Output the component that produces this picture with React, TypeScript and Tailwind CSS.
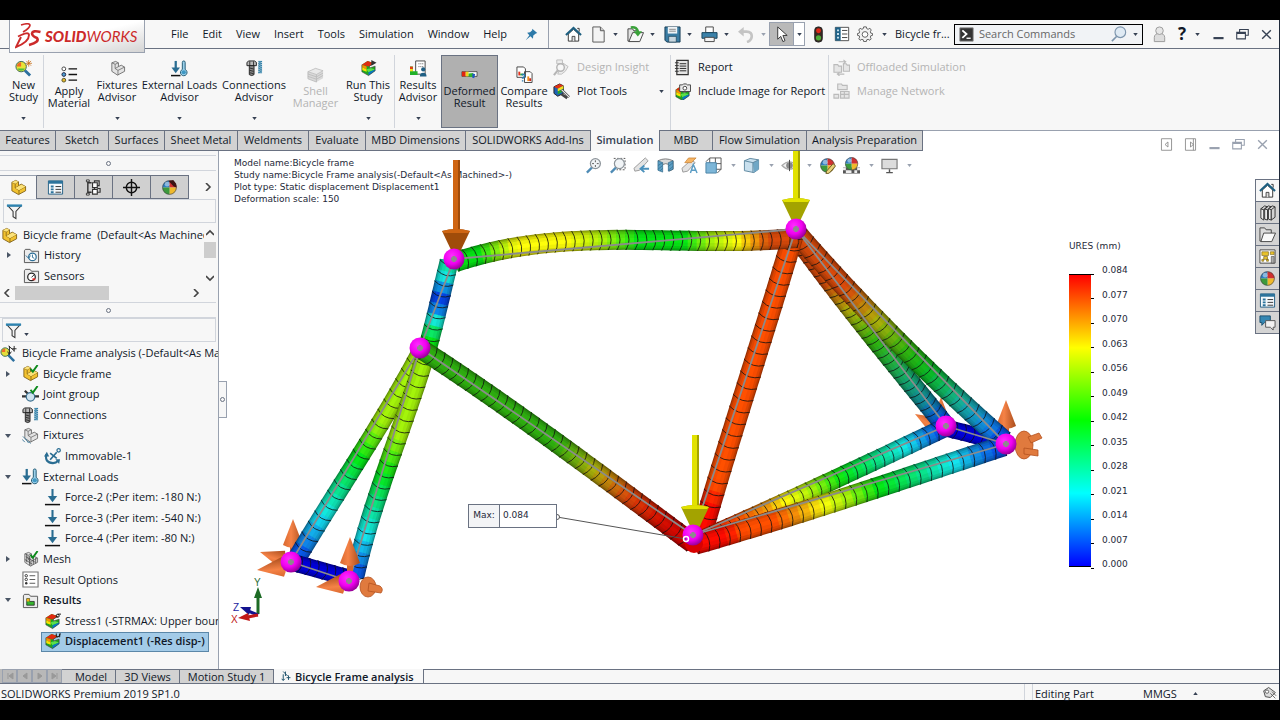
import type { ReactNode } from "react"
import clsx from "clsx"

/* ---------- icons, all drawn on an 18x18 grid ---------- */

const partShape = (
  <>
    <path d="M2 3.5 6 1.5l3 1.5v4l3-1.5 4.500 2.500v4.500L9 16.500l-7-4z" fill="#f2c230" stroke="#7a5a10" strokeWidth=".9" />
    <path d="M2 3.500 5.500 5v4.500L9.500 12l7-4M5.500 5 9 3M9.500 12v4.300M5.500 9.500 9 7.500" fill="none" stroke="#7a5a10" strokeWidth=".8" />
    <path d="M2 3.500 6 1.500 9 3 5.500 5zM5.500 9.500 12 6l4.500 2-7 4z" fill="#fbe27a" />
  </>
)

const fixtureShape = (
  <>
    <path d="M3 3l4-1.500 3 1.500v4l3-1.500 3.500 2V12L9 16l-6-4z" fill="#e3e3e3" stroke="#666" strokeWidth=".9" />
    <path d="M3 3l3.500 1.500V9L9.500 11l7-3.500M6.500 4.500 10 3M9.500 11v5M6.500 9 10 7" fill="none" stroke="#666" strokeWidth=".8" />
  </>
)

const rainbowShape = (
  <>
    <path d="M2 5 8 1l7 2.500-5 3v2l6-2v5l-7 5-7-4z" fill="#1fa51f" />
    <path d="M2 5 8 1l7 2.500L9 7z" fill="#e02a10" />
    <path d="M2 5l5 2v3l-5-2.500z" fill="#ff8a00" />
    <path d="M2 7.500 7 10v2.500l-5-2z" fill="#f4e400" />
    <path d="M7 10l4-1.500L16 10l-7 3z" fill="#5be04a" />
    <path d="M9 13l7-3v1.500l-7 5z" fill="#0877c8" />
    <path d="M2 5v7.500l7 4 7-5v-5l-6 2v-2l5-3" fill="none" stroke="#333" strokeWidth=".6" />
  </>
)

const houseShape = (
  <>
    <path d="M3.500 8.500v7.500h11V8.500L9 3.500z" fill="#fff" stroke="#333" strokeWidth="1" />
    <path d="M1 9.500 9 2l8 7.500" fill="none" stroke="#1d5f80" strokeWidth="2.200" />
    <path d="M13 2.500h2V6" fill="none" stroke="#333" />
    <path d="M7.500 16v-5h3v5" fill="#ddd" stroke="#333" strokeWidth=".9" />
  </>
)

const ballShape = (
  <>
    <path d="M9 9V1.500A7.500 7.500 0 0 0 1.500 9z" fill="#2f7fc4" />
    <path d="M9 9h7.500A7.500 7.500 0 0 0 9 1.500z" fill="#d03030" />
    <path d="M9 9v7.500A7.500 7.500 0 0 0 16.500 9z" fill="#efb92c" />
    <path d="M9 9H1.500A7.500 7.500 0 0 0 9 16.500z" fill="#3c9a3c" />
    <circle cx="9" cy="9" r="7.300" fill="none" stroke="#444" strokeWidth=".7" />
    <circle cx="6.500" cy="5.500" r="2.500" fill="#fff" opacity=".45" />
  </>
)

const propsShape = (
  <>
    <path d="M1.500 2h15v14h-15z" fill="#f4f8fb" stroke="#235f84" />
    <path d="M1.500 2h15v3h-15z" fill="#2b739c" />
    <path d="M4 7h3v2H4zM4 10h3v2H4zM4 13h3v2H4z" fill="#2b739c" />
    <path d="M9 8h6M9 11h6M9 14h6" stroke="#333" />
  </>
)

const forceShape = (
  <>
    <path d="M9 0v10" stroke="#2a6d92" strokeWidth="2.200" />
    <path d="M4 7.500h10L9 14z" fill="#2a6d92" />
    <path d="M1 16.500h16" stroke="#111" strokeWidth="1.600" />
  </>
)

const loadsShape = (
  <>
    <path d="M5 1v10" stroke="#2a6d92" strokeWidth="2.400" />
    <path d="M.5 8h9L5 14z" fill="#2a6d92" />
    <path d="M0 16.500h10" stroke="#111" strokeWidth="1.600" />
    <path d="M12 2.500a1.500 1.500 0 0 1 3 0V10a3.500 3.500 0 1 1-3 0z" fill="#9bd0ea" stroke="#1f5873" />
    <circle cx="13.500" cy="13" r="2.200" fill="#3f98c4" />
  </>
)

const boltShape = (
  <>
    <path d="M1 2.500 3 1h6l2 1.500V6H1z" fill="#b9b9b9" stroke="#222" />
    <path d="M3.500 6h5v9.500l-2.500 1-2.500-1z" fill="#888" stroke="#222" />
    <path d="M4 8.500l4 1M4 11l4 1M4 13.500l4 1M4 1.500V6M8 1.500V6" stroke="#222" strokeWidth=".9" />
    <path d="M13 1.500h4l-4 2h4l-4 2h4l-4 2h4l-4 2h4l-4 2h4l-4 2h4" fill="none" stroke="#2c7da6" strokeWidth="1" />
  </>
)

const folderShape = <path d="M1.500 4V16.500h15V4.500H9L7.500 2.500h-5z" fill="#ececec" stroke="#555" />
const tickShape = <path d="M9 4l2.500 3L16.500 0" fill="none" stroke="#0d8a1c" strokeWidth="2" />

const lensShape = (
  <>
    <path d="M7.500 11 2 16.500" stroke="#4e8bb5" strokeWidth="2.400" />
    <circle cx="11" cy="7" r="5.300" fill="#f1f4f6" stroke="#8c9399" strokeWidth="1.300" />
  </>
)

const glyphs = {
  newStudy: (
    <>
      <path d="M10.500 11 16 16.500" stroke="#2c6f9e" strokeWidth="3" />
      <circle cx="6.500" cy="7" r="5.500" fill="#e9e337" stroke="#365" />
      <path d="M2 7a4.500 4.500 0 0 1 4.500-4.500V7z" fill="#ef6a28" />
      <path d="M2.500 9h8A4.500 4.500 0 0 1 2.500 9z" fill="#4bc13e" />
      <path d="M14.500 0v7M11 3.500h7M12 1l5 5M17 1l-5 5" stroke="#c56a12" strokeWidth=".8" />
    </>
  ),
  material: (
    <>
      <path d="M8 3h9M8 9h9M8 15h9" stroke="#111" strokeWidth="1.400" />
      <circle cx="3" cy="3" r="2" fill="#fff" stroke="#444" />
      <circle cx="3" cy="9" r="2" fill="#4c9fd2" stroke="#224" />
      <circle cx="3" cy="15" r="2" fill="#e3b62a" stroke="#553" />
    </>
  ),
  fixtures: fixtureShape,
  fixtureTree: (
    <>
      {fixtureShape}
      <path d="M1 10l4 4M0 13l3 3M4 13l3 4M7 15l2 2.500" stroke="#457b99" />
    </>
  ),
  loads: loadsShape,
  bolt: boltShape,
  shell: (
    <>
      <path d="M1 6 9 2.500 17 5v8l-7 4-9-3.500z" fill="#d9d9d9" />
      <path d="M1 6 9 2.500 17 5l-7 4z" fill="#e9e9e9" stroke="#bbb" strokeWidth=".8" />
      <path d="M1 8.500l9 3 7-4M1 11l9 3 7-4M1 6v7.500l9 3.500V9" fill="none" stroke="#bbb" strokeWidth=".9" />
    </>
  ),
  run: (
    <>
      {rainbowShape}
      <path d="M12 0l5.500 3L12 6z" fill="#333" />
    </>
  ),
  results: (
    <>
      <path d="M6 1h10v14H6z" fill="#fff" stroke="#444" />
      <path d="M9 4h5M9 7h5" stroke="#555" strokeDasharray="1 1" />
      <path d="M0 7h3v5h5v4H0z" fill="#20b028" />
      <path d="M0 7h3v2.500H0z" fill="#e83c10" />
      <path d="M0 9.500h3V12H0z" fill="#f5e020" />
      <circle cx="14" cy="10" r="2.200" fill="#1f5f84" />
      <path d="M10.500 17.500a3.500 4 0 0 1 7 0z" fill="#1f5f84" />
    </>
  ),
  deformed: (
    <>
      <path d="M1 6h16v5H1z" fill="#fff" stroke="#333" strokeWidth=".8" />
      <path d="M1 6h4v5H1z" fill="#e0250f" />
      <path d="M5 6h3v5H5z" fill="#f0d51c" />
      <path d="M8 8l5-.5v4.500L8 11z" fill="#2eb52a" />
      <path d="M12 8l3 .5-1 4.500-2-.5z" fill="#2157c2" />
    </>
  ),
  compare: (
    <>
      <path d="M1 1h7l2 2v9H1zM9 6h6l2 2v9.500H9z" fill="#fff" stroke="#444" />
      <path d="M2.500 6h2v4h-2z" fill="#e4301a" />
      <path d="M4.500 8h3v2h-3z" fill="#2aa62a" />
      <path d="M12 11h2v5h-2z" fill="#ef8c1a" />
      <path d="M14 13h2v3h-2z" fill="#cc2a1a" />
      <path d="M6 9.500q3-2 3 .5t-2 2.500v1M7 15v1.500" fill="none" stroke="#2b7cb0" strokeWidth="1.600" />
    </>
  ),
  insight: (
    <>
      <path d="M4 1h6v4H4zM10 4l6 4-3 5-4 3H5z" fill="#ececec" stroke="#bdbdbd" />
      <circle cx="8" cy="9" r="4" fill="#f7f7f7" stroke="#b5b5b5" strokeWidth="1.500" />
      <path d="M5 12l-4 5" stroke="#b5b5b5" strokeWidth="2.200" />
    </>
  ),
  plot: (
    <>
      <path d="M1 4l6-3 4 2v8l-6 3-4-3z" fill="#1e64b8" stroke="#222" />
      <path d="M1 4l6-3 4 2-6 3z" fill="#e23214" />
      <path d="M5 6l6-3v3L5 9z" fill="#f5e11b" />
      <path d="M5 9l6-3v3l-6 3z" fill="#27a52b" />
      <path d="M9 7l8 8M9 12l6 4" stroke="#444" strokeWidth="2.600" />
      <path d="M9 7l8 8" stroke="#eee" strokeWidth="1.200" />
    </>
  ),
  report: (
    <>
      <path d="M3 1.500h12v15H3z" fill="#e5e5e5" stroke="#333" strokeWidth="1.300" />
      <path d="M6 5h7M6 7.500h7M6 10h7M6 12.500h7" stroke="#222" />
      <path d="M1 4h4M1 7h4M1 10h4M1 13h4" stroke="#333" />
    </>
  ),
  imageReport: (
    <>
      <g transform="translate(0 2)">{rainbowShape}</g>
      <path d="M6 2h3l1-1h3l1 1h3.500v7H6z" fill="#e9e9e9" stroke="#444" />
      <circle cx="11.500" cy="5.500" r="2" fill="#fff" stroke="#444" />
    </>
  ),
  offload: (
    <>
      <path d="M1 6h4l1 1.500h3V14H1zM11 5h3l1 1.500h2.500V13H11z" fill="#e6e6e6" stroke="#bbb" strokeWidth="1.200" />
      <path d="M6 3h7M11 1l2.500 2L11 5M12 16H5M7 14l-2.500 2L7 18" fill="none" stroke="#bbb" strokeWidth="1.100" />
    </>
  ),
  network: (
    <path d="M5 1h4l1 1.500h5V7H5zM8 9h9v7H8zM1 12h5v4H1zM8 12h9M12 9v7" fill="#e6e6e6" stroke="#bbb" strokeWidth="1.200" />
  ),
  pin: <path d="M10 1l7 6-2 .5-3.500 3L11 15 7.500 11.500 1 17l5-7L3 6.500l4-.5 3-3z" fill="#2d79a8" />,
  house: houseShape,
  page: (
    <>
      <path d="M3 1h8l4 4v12H3z" fill="#f3f3f3" stroke="#555" />
      <path d="M11 1v4h4" fill="#ccc" stroke="#555" />
    </>
  ),
  open: (
    <>
      <path d="M1 3h5l1 2h5v11H1z" fill="#e2e2e2" stroke="#444" />
      <path d="M2 16.500 6 7h11.500l-4 9.500z" fill="#f7f7f7" stroke="#444" />
      <path d="M4 1.500q7-1 7.500 5" fill="none" stroke="#3aa23a" strokeWidth="2.600" />
      <path d="M7 5.500h9L11.500 11z" fill="#3aa23a" />
    </>
  ),
  save: (
    <>
      <path d="M1 1h16v16H3l-2-2z" fill="#3a7ca3" stroke="#153c54" />
      <path d="M4 1h10v7H4z" fill="#eef3f6" />
      <path d="M5.500 3.500h7M5.500 5.500h7" stroke="#888" />
      <path d="M5 11h8v6H5z" fill="#c8d6df" stroke="#153c54" strokeWidth=".7" />
    </>
  ),
  print: (
    <>
      <path d="M5 1h8v6H5z" fill="#fff" stroke="#444" />
      <path d="M1 7h16v6H1z" fill="#3b82aa" stroke="#17445e" />
      <path d="M4 12h10v4.500H4z" fill="#f4f4f4" stroke="#444" />
    </>
  ),
  undo: (
    <>
      <path d="M3 6h6q6 0 5.500 5.500-.5 4-5 5.500" fill="none" stroke="#c4c4c4" strokeWidth="2.800" />
      <path d="M0 6l6-5v10z" fill="#c4c4c4" />
    </>
  ),
  cursor: <path d="M5 1v13l3.200-3 2.300 5.500 2.200-1L10.500 10H15z" fill="#fff" stroke="#333" />,
  traffic: (
    <>
      <rect x="5" y="1" width="8" height="16" rx="3.500" fill="#3a2a22" stroke="#222" />
      <circle cx="9" cy="5" r="2.600" fill="#e02818" />
      <circle cx="9" cy="12.500" r="2.800" fill="#4fae3a" />
    </>
  ),
  list: (
    <>
      <path d="M1.500 1.500h15v15h-15z" fill="#fff" stroke="#444" />
      <path d="M1.500 1.500h6v15h-6z" fill="#1f6288" />
      <path d="M3.500 4h2v2h-2zM3.500 8h2v2h-2zM3.500 12h2v2h-2z" fill="#d8ecf7" />
      <path d="M9 5h6M9 9h6M9 13h6" stroke="#333" />
    </>
  ),
  gear: (
    <>
      <path d="M7.500 1h3l.5 2 1.500.700L14.500 2.500l1.500 2-1 2 .500 1.500 2 .500v2l-2 .500-.500 1.500 1 2-1.500 1.500-2-1-1.500.500-.500 2h-3l-.500-2-1.500-.500-2 1L2 14.500l1-2-.500-1.500-2-.500v-2l2-.500L3 6.500l-1-2 1.500-2 2 1.200L7 3z" fill="#f2f2f2" stroke="#555" />
      <circle cx="9" cy="9.500" r="3.200" fill="#fff" stroke="#555" />
    </>
  ),
  prompt: (
    <>
      <path d="M1 1h16v16H1z" fill="#333" stroke="#888" />
      <path d="M4 4l5 4.500L4 13" fill="none" stroke="#fff" strokeWidth="2.200" />
      <path d="M9 13.500h5" stroke="#fff" strokeWidth="1.600" />
    </>
  ),
  search: (
    <>
      <path d="M6.500 11.500 1 17" stroke="#7d95ad" strokeWidth="1.800" />
      <circle cx="10.500" cy="7" r="6" fill="#dfeaf4" stroke="#7d95ad" strokeWidth="1.300" />
    </>
  ),
  user: (
    <>
      <path d="M3.500 12a5.500 4.500 0 0 1 11 0v4.500h-11z" fill="#ddd" stroke="#999" />
      <circle cx="9" cy="5" r="4" fill="#e6e6e6" stroke="#999" />
    </>
  ),
  part: partShape,
  partOk: (
    <>
      {partShape}
      {tickShape}
    </>
  ),
  props: propsShape,
  config: (
    <>
      <path d="M3 1v16M3 4h4M3 14h4" stroke="#333" strokeWidth="1.500" />
      <path d="M1.500 1h3v2h-3zM1.500 15h3v2h-3z" fill="#fff" stroke="#333" />
      <path d="M8 4h5v5H8zM8 11h5v5H8z" fill="#fff" stroke="#333" strokeWidth="1.200" />
      <path d="M10 4V2h5v5h-2M10 11V9.500M13 14h3v-4h-3" fill="none" stroke="#333" strokeWidth="1.200" />
    </>
  ),
  target: (
    <>
      <circle cx="9" cy="9" r="5.500" fill="none" stroke="#111" strokeWidth="1.500" />
      <path d="M9 0v18M0 9h18" stroke="#111" strokeWidth="1.500" />
    </>
  ),
  ball: ballShape,
  ballDark: (
    <>
      {ballShape}
      <path d="M8 2l5-1 3 4 .5 4-3-1z" fill="#3d1414" />
    </>
  ),
  funnel: (
    <>
      <path d="M2 3h14l-5.500 6v7.500l-3-2V9z" fill="#f4f4f4" stroke="#333" strokeWidth="1.100" />
      <path d="M1 1.500h16v2.500H1z" fill="#2e83b0" />
    </>
  ),
  history: (
    <>
      {folderShape}
      <circle cx="10" cy="10.500" r="4" fill="#fff" stroke="#2e6f96" strokeWidth="1.300" />
      <path d="M10 8v3l2 1M3 9l3 3 2-3" fill="none" stroke="#2e6f96" />
    </>
  ),
  sensors: (
    <>
      {folderShape}
      <circle cx="9" cy="10.500" r="4" fill="#fff" stroke="#222" strokeWidth="1.300" />
      <path d="M9 11l3-3" stroke="#222" />
      <path d="M10 12h3v2h-3z" fill="#d22" />
    </>
  ),
  study: (
    <>
      <path d="M8 10l7 7" stroke="#2c6f9e" strokeWidth="2.600" />
      <circle cx="5.500" cy="7.500" r="4.500" fill="#e4dd3c" stroke="#365" />
      <path d="M2 7.500A3.500 3.500 0 0 1 5.500 4v3.500z" fill="#ef6a28" />
      <path d="M10 1v9M8 7l2 3 2-3M15 1v6M13 4h4.500M9 1l6 5" fill="none" stroke="#222" />
    </>
  ),
  joint: (
    <>
      <path d="M0 11h5M13 11h5M3 5l3 3" stroke="#333" strokeWidth="2.400" />
      <circle cx="9" cy="11.500" r="4.500" fill="#cfe4f0" stroke="#3a6f8f" strokeWidth="1.300" />
      {tickShape}
    </>
  ),
  anchor: (
    <>
      <path d="M13.500 4.500 6.500 12.500M6.500 5.500l7 5.500" stroke="#2a6d92" strokeWidth="1.800" />
      <circle cx="15.500" cy="2.500" r="1.800" fill="none" stroke="#2a6d92" strokeWidth="1.300" />
      <path d="M2.500 7q-2 8.500 7 9 3.500 0 5-2" fill="none" stroke="#2a6d92" strokeWidth="2.200" />
      <path d="M0 9l3-5 2.500 5zM12 12l5 0-1 5z" fill="#2a6d92" />
    </>
  ),
  force: forceShape,
  mesh: (
    <>
      {fixtureShape}
      <path d="M4 6l10 6M3 9l8 5M5 3v9M8 5v10M12 7v7M14.500 7v6" stroke="#444" strokeWidth=".8" />
      {tickShape}
    </>
  ),
  options: (
    <>
      <path d="M1 1h16v16H1z" fill="#fff" stroke="#777" strokeWidth="1.200" />
      <path d="M8 5h6M8 9h6M8 13h6" stroke="#555" />
      <circle cx="4.500" cy="5" r="1.300" fill="#fff" stroke="#333" />
      <circle cx="4.500" cy="9" r="1.300" fill="#fff" stroke="#333" />
      <circle cx="4.500" cy="13" r="1.300" fill="#333" />
    </>
  ),
  resultFolder: (
    <>
      {folderShape}
      <path d="M5 7h3v3h5v4H5z" fill="#35b52e" stroke="#222" strokeWidth=".8" />
      <path d="M5 7h3v3H5z" fill="#f0b01c" />
    </>
  ),
  stress: (
    <>
      {rainbowShape}
      <circle cx="14.500" cy="3" r="1.600" fill="none" stroke="#111" />
      <path d="M14.500 1.200H18" stroke="#111" />
    </>
  ),
  displacement: (
    <>
      {rainbowShape}
      <path d="M13 .5v3q1.500 1.500 3 0l1-3-.5 4" fill="none" stroke="#111" />
    </>
  ),
  analysis: <path d="M4 1l8 8M8 1v8M4 6v11M4 17l-3-3M4 17l3-3M10 12h7M13.500 8v8" fill="none" stroke="#23566f" strokeWidth="1.800" />,
  zoomFit: (
    <>
      {lensShape}
      <path d="M11 3.500v7M7.500 7h7" stroke="#555" strokeDasharray="2 3" />
    </>
  ),
  zoomArea: (
    <>
      <path d="M5 1.500h12v12H8" fill="none" stroke="#555" strokeDasharray="2 1.500" />
      {lensShape}
    </>
  ),
  prevView: (
    <>
      <path d="M1 12 13 1l3 3-9 10-5 1z" fill="#e3e3e3" stroke="#999" />
      <path d="M9 12.500h8M12 9l-4 3.500 4 3.500" fill="none" stroke="#4a90bb" strokeWidth="2" />
    </>
  ),
  section: (
    <>
      <path d="M1 4q8-4 16 0v9l-4 2V8q-4-2-7 0" fill="#d9d9d9" stroke="#777" />
      <path d="M1 4l5 2v10l-5-2zM12 6l5-2v9l-5 2z" fill="#5d9fc5" stroke="#2b6485" strokeWidth=".7" />
      <path d="M1 9l5-3M1 13l5-4M3 15l3-3M12 10l5-4M12 14l5-4" stroke="#2b6485" strokeWidth=".6" />
    </>
  ),
  dynamic: (
    <>
      <path d="M1 12 11 3l4 3-8 9-5 1z" fill="#e3e3e3" stroke="#999" />
      <path d="M4 6 8 1h8l-5 5z" fill="#f5b463" stroke="#c47a2a" strokeWidth=".7" />
      <path d="M10 17l3-9 4 9M11 14h5" fill="none" stroke="#5a9cc4" strokeWidth="1.500" />
    </>
  ),
  orient: (
    <>
      <path d="M5 1h12v12H5zM11 1v12M5 7h12M1 5l4-4M17 13l-4 4" fill="#fff" stroke="#555" />
      <path d="M1 6h11v11H1z" fill="#7db6d8" stroke="#4a83a6" />
    </>
  ),
  cube: (
    <>
      <path d="M1.500 4l6-2.500 9 1.500v10l-5 3.500-10-2z" fill="#c9e0ee" stroke="#5c879f" />
      <path d="M10.500 6l6-3v10l-5 3.500z" fill="#6fa7c6" />
      <path d="M1.500 4 10.500 6v10.500M10.500 6l6-3" fill="none" stroke="#5c879f" />
    </>
  ),
  eye: (
    <>
      <path d="M1 9q8-8 16 0-8 8-16 0z" fill="#f1f1f1" stroke="#aaa" strokeWidth="1.200" />
      <circle cx="9" cy="9" r="3.500" fill="#888" />
      <path d="M9 3v12" stroke="#444" />
    </>
  ),
  ballPen: (
    <>
      {ballShape}
      <path d="M8 15l7-8 2.500 2.500L11 17l-3.500 1z" fill="#e8d27a" stroke="#6b5b23" />
    </>
  ),
  ballScene: (
    <>
      <path d="M0 11h18v6.500H0z" fill="#555" />
      <path d="M0 11h3v3H0zM6 14h3v3H6zM3 14h3v3H3zM12 14h3v3h-3zM15 11h3v3h-3z" fill="#eee" />
      <g transform="translate(1 -1) scale(.9)">{ballShape}</g>
    </>
  ),
  monitor: (
    <>
      <path d="M1 2.500h16v10H1z" fill="#dcdcdc" stroke="#777" strokeWidth="1.200" />
      <path d="M9 13v3M5.500 16.500h7" stroke="#555" strokeWidth="1.500" />
    </>
  ),
  books: (
    <>
      <path d="M2 5l3 1v11l-3-2zM6 5l3 1v11l-3-1zM10 5l3 1v11l-3-1z" fill="#eee" stroke="#333" />
      <path d="M2 5l4-3 3 1-4 3zM6 5l4-3 3 1-4 3zM10 5l4-3 3 1-4 3v11l4-3V3" fill="#d2d2d2" stroke="#333" />
    </>
  ),
  folderOpen: (
    <>
      <path d="M1 2h5l1.500 2H13v4L3 16H1z" fill="#ddd" stroke="#444" />
      <path d="M2 16.500 5 7.500h12.500l-4 9z" fill="#fafafa" stroke="#444" />
    </>
  ),
  palette: (
    <>
      <path d="M1 2h16v14H1z" fill="#fff" stroke="#444" />
      <path d="M3 4h7v4H3zM12 4h4v3h-4zM3 12h2v2H3zM8 12h2v2H8zM5 9h4v3H5z" fill="#e9c22a" stroke="#6b5714" strokeWidth=".6" />
      <path d="M13 9h3v7h-3z" fill="#aaa" stroke="#444" strokeWidth=".6" />
    </>
  ),
  forum: (
    <>
      <path d="M1 2h11v7H6l-3 3V9H1z" fill="#3587b3" stroke="#1d516e" />
      <path d="M7 7h10v7h-2v3l-3-3H7z" fill="#f2f2f2" stroke="#555" />
    </>
  ),
  paneLeft: <path d="M2 1h14v16H2zM11 5.500v7L7 9z" fill="none" stroke="#888" strokeWidth="1.200" />,
  paneRight: <path d="M2 1h14v16H2zM9 5.500v7L13 9zM13 1v16" fill="none" stroke="#888" strokeWidth="1.200" />,
  minimize: <path d="M2 14h14" stroke="currentColor" strokeWidth="3" />,
  restore: <path d="M5 6V2h12v8h-4M1 6h12v9H1zM1 7.500h12" fill="none" stroke="currentColor" strokeWidth="1.500" />,
  close: <path d="M3 3l12 12M15 3 3 15" stroke="currentColor" strokeWidth="1.900" />,
  tag: (
    <>
      <path d="M2 7l6-4 8 6-6 6-6-1z" fill="#ddd" stroke="#555" strokeWidth="1.200" />
      <circle cx="6" cy="8" r="2" fill="#fff" stroke="#555" />
      <path d="M10 10l6 6M12 8l5 5" stroke="#555" />
    </>
  ),
}

type GlyphName = keyof typeof glyphs

function Icon({ name, className = "size-[17px]" }: { name: GlyphName; className?: string }) {
  return (
    <svg viewBox="0 0 18 18" className={clsx("shrink-0", className)} fill="none" aria-hidden="true">
      {glyphs[name]}
    </svg>
  )
}

function Caret({ className = "text-gray-700" }: { className?: string }) {
  return (
    <svg viewBox="0 0 6 4" className={clsx("h-[3px] w-[5px] shrink-0", className)} aria-hidden="true">
      <path d="M0 0h6L3 4z" fill="currentColor" />
    </svg>
  )
}

/* ---------- title bar ---------- */

const menus = ["File", "Edit", "View", "Insert", "Tools", "Simulation", "Window", "Help"]

const quickTools: { icon: GlyphName; label: string; dim?: boolean }[] = [
  { icon: "page", label: "New" },
  { icon: "open", label: "Open" },
  { icon: "save", label: "Save" },
  { icon: "print", label: "Print" },
  { icon: "undo", label: "Undo", dim: true },
]

function Logo() {
  return (
    <div className="absolute left-[9px] top-0 z-10 flex h-[33px] w-[136px] items-center gap-1 border border-t-0 border-gray-400 bg-gradient-to-br from-white via-white to-[#d4d4d4] pl-[5px] text-[#cc2a2a]">
      <svg viewBox="0 0 26 26" className="size-[26px] shrink-0" fill="none" stroke="currentColor">
        <path d="M6 2q8-2.500 9 0 0 3-7 7" strokeWidth="1.700" />
        <path d="M3 13.500q11-5.500 11-1.500 0 7-13 12l5-10" strokeWidth="1.900" />
        <path d="M25.500 9q-8-2-8.500 1.500 0 2.500 5 4.500 3 4-8 7" strokeWidth="2.600" />
      </svg>
      <span className="font-[Lato] text-[15px] leading-5 italic">
        <b className="font-black">SOLID</b>WORKS
      </span>
    </div>
  )
}

function TitleBar() {
  return (
    <header className="relative flex h-[29px] shrink-0 items-center border-b border-gray-500">
      <Logo />
      <nav className="flex w-[548px] shrink-0 items-center gap-[14px] pl-[171px]">
        {menus.map((m) => (
          <button key={m}>{m}</button>
        ))}
        <button aria-label="Pin menu" className="ml-1">
          <Icon name="pin" className="size-[13px]" />
        </button>
      </nav>
      <div className="flex h-full grow items-center border-l border-gray-400">
        <button aria-label="Home" className="ml-4 mr-1">
          <Icon name="house" />
        </button>
        {quickTools.map((t) => (
          <button key={t.icon} aria-label={t.label} className="flex w-[37px] items-center gap-[6px] pl-1">
            <Icon name={t.icon} />
            <Caret className={t.dim ? "text-gray-400" : "text-gray-700"} />
          </button>
        ))}
        <div className="-ml-[2px] flex h-[24px] w-[36px] border border-gray-400">
          <button aria-label="Select" className="flex w-6 items-center justify-center border-r border-gray-400 bg-[#b9b9b9]">
            <Icon name="cursor" />
          </button>
          <button aria-label="Select options" className="flex grow items-center justify-center bg-white">
            <Caret />
          </button>
        </div>
        <div className="ml-[5px] flex items-center gap-[7px]">
          <button aria-label="Rebuild">
            <Icon name="traffic" />
          </button>
          <button aria-label="File properties">
            <Icon name="list" className="size-4" />
          </button>
          <button aria-label="Options" className="flex items-center gap-[9px]">
            <Icon name="gear" className="size-4" />
            <Caret />
          </button>
        </div>
        <span className="ml-2 whitespace-nowrap">Bicycle fr...</span>
      </div>
      <div className="flex h-full shrink-0 items-center">
        <div className="flex h-[21px] w-[189px] items-center border border-black bg-[#f1f3f6] px-1">
          <Icon name="prompt" className="size-[15px]" />
          <input
            aria-label="Search Commands"
            placeholder="Search Commands"
            className="ml-[5px] w-0 grow bg-transparent outline-none placeholder:text-[#666]"
          />
          <button aria-label="Search" className="flex items-center gap-[6px]">
            <Icon name="search" className="size-4" />
            <Caret />
          </button>
        </div>
        <button aria-label="Account" className="ml-2">
          <Icon name="user" />
        </button>
        <button aria-label="Help" className="ml-[10px] flex items-center gap-[9px]">
          <b className="text-[17px]">?</b>
          <Caret />
        </button>
        <div className="ml-3 mr-[6px] flex gap-[11px] text-gray-700">
          <button aria-label="Minimize window">
            <Icon name="minimize" className="size-[13px]" />
          </button>
          <button aria-label="Restore window">
            <Icon name="restore" className="size-[13px]" />
          </button>
          <button aria-label="Close window">
            <Icon name="close" className="size-[13px]" />
          </button>
        </div>
      </div>
    </header>
  )
}

/* ---------- ribbon ---------- */

function BigTool(props: {
  icon: GlyphName
  lines: [string, string]
  width: string
  caret?: boolean
  disabled?: boolean
  active?: boolean
}) {
  const { icon, lines, width, caret, disabled, active } = props
  return (
    <button
      disabled={disabled}
      className={clsx(
        "flex h-[73px] shrink-0 flex-col items-center border whitespace-nowrap leading-3",
        width,
        caret ? "pt-1" : "pt-[10px]",
        disabled && "text-[#b4b4b4]",
        active ? "border-gray-500 bg-[#b0b0b0]" : "border-transparent"
      )}
    >
      <Icon name={icon} />
      <span className="mt-[2px]">{lines[0]}</span>
      <span>{lines[1]}</span>
      {caret && (
        <span className="mt-[14px]">
          <Caret />
        </span>
      )}
    </button>
  )
}

function SmallTool({ icon, label, disabled, caret }: { icon: GlyphName; label: string; disabled?: boolean; caret?: boolean }) {
  return (
    <button disabled={disabled} className={clsx("flex h-6 items-center gap-[7px] whitespace-nowrap", disabled && "text-[#b4b4b4]")}>
      <Icon name={icon} />
      {label}
      {caret && (
        <span className="ml-auto flex">
          <Caret />
        </span>
      )}
    </button>
  )
}

function Ribbon() {
  return (
    <div className="flex h-[81px] shrink-0 pt-[6px]">
      <BigTool icon="newStudy" lines={["New", "Study"]} width="w-[47px]" caret />
      <div className="-ml-1 h-[73px] w-px bg-gray-300" />
      <BigTool icon="material" lines={["Apply", "Material"]} width="w-[50px]" />
      <BigTool icon="fixtures" lines={["Fixtures", "Advisor"]} width="w-[46px]" caret />
      <BigTool icon="loads" lines={["External Loads", "Advisor"]} width="w-[79px]" caret />
      <BigTool icon="bolt" lines={["Connections", "Advisor"]} width="w-[70px]" caret />
      <BigTool icon="shell" lines={["Shell", "Manager"]} width="w-[53px]" disabled />
      <BigTool icon="run" lines={["Run This", "Study"]} width="w-[52px]" caret />
      <div className="h-[73px] w-px bg-gray-300" />
      <BigTool icon="results" lines={["Results", "Advisor"]} width="w-[46px]" caret />
      <BigTool icon="deformed" lines={["Deformed", "Result"]} width="w-[57px]" active />
      <BigTool icon="compare" lines={["Compare", "Results"]} width="w-[52px]" />
      <div className="ml-[3px] flex w-[118px] flex-col border-r border-gray-300 pr-[6px]">
        <SmallTool icon="insight" label="Design Insight" disabled />
        <SmallTool icon="plot" label="Plot Tools" caret />
      </div>
      <div className="ml-[3px] flex w-[155px] flex-col border-r border-gray-300">
        <SmallTool icon="report" label="Report" />
        <SmallTool icon="imageReport" label="Include Image for Report" />
      </div>
      <div className="ml-1 flex flex-col">
        <SmallTool icon="offload" label="Offloaded Simulation" disabled />
        <SmallTool icon="network" label="Manage Network" disabled />
      </div>
    </div>
  )
}

const ribbonTabs: [string, string][] = [
  ["Features", "w-[56px]"],
  ["Sketch", "w-[53px]"],
  ["Surfaces", "w-[56px]"],
  ["Sheet Metal", "w-[73px]"],
  ["Weldments", "w-[71px]"],
  ["Evaluate", "w-[57px]"],
  ["MBD Dimensions", "w-[100px]"],
  ["SOLIDWORKS Add-Ins", "w-[125px]"],
  ["Simulation", "w-[69px]"],
  ["MBD", "w-[53px]"],
  ["Flow Simulation", "w-[94px]"],
  ["Analysis Preparation", "w-[116px]"],
]

function RibbonTabs() {
  return (
    <div className="flex h-[21px] shrink-0 bg-white">
      {ribbonTabs.map(([label, width]) => (
        <button
          key={label}
          className={clsx(
            "shrink-0 whitespace-nowrap border-r border-gray-500",
            width,
            label === "Simulation" ? "bg-[#f7f7f7] font-semibold text-gray-700" : "border-y bg-[#d2d2d2]"
          )}
        >
          {label}
        </button>
      ))}
      <div className="flex grow items-end justify-end gap-[11px] border-t border-gray-400 pr-[10px] text-gray-400">
        <button aria-label="Dock left">
          <Icon name="paneLeft" className="size-[13px]" />
        </button>
        <button aria-label="Dock right">
          <Icon name="paneRight" className="size-[13px]" />
        </button>
        <button aria-label="Minimize document">
          <Icon name="minimize" className="size-[13px]" />
        </button>
        <button aria-label="Restore document">
          <Icon name="restore" className="size-[13px]" />
        </button>
        <button aria-label="Close document">
          <Icon name="close" className="size-[13px]" />
        </button>
      </div>
    </div>
  )
}

/* ---------- left panel ---------- */

type TreeItem = { icon: GlyphName; label: string; level: 0 | 1 | 2; arrow?: "open" | "closed"; bold?: boolean; selected?: boolean }

const featureTree: TreeItem[] = [
  { icon: "part", label: "Bicycle frame  (Default<As Machined", level: 0 },
  { icon: "history", label: "History", level: 1, arrow: "closed" },
  { icon: "sensors", label: "Sensors", level: 1 },
]

const studyTree: TreeItem[] = [
  { icon: "study", label: "Bicycle Frame analysis (-Default<As Ma", level: 0 },
  { icon: "partOk", label: "Bicycle frame", level: 1, arrow: "closed" },
  { icon: "joint", label: "Joint group", level: 1 },
  { icon: "bolt", label: "Connections", level: 1 },
  { icon: "fixtureTree", label: "Fixtures", level: 1, arrow: "open" },
  { icon: "anchor", label: "Immovable-1", level: 2 },
  { icon: "loads", label: "External Loads", level: 1, arrow: "open" },
  { icon: "force", label: "Force-2 (:Per item: -180 N:)", level: 2 },
  { icon: "force", label: "Force-3 (:Per item: -540 N:)", level: 2 },
  { icon: "force", label: "Force-4 (:Per item: -80 N:)", level: 2 },
  { icon: "mesh", label: "Mesh", level: 1, arrow: "closed" },
  { icon: "options", label: "Result Options", level: 1 },
  { icon: "resultFolder", label: "Results", level: 1, arrow: "open", bold: true },
  { icon: "stress", label: "Stress1 (-STRMAX: Upper boun", level: 2 },
  { icon: "displacement", label: "Displacement1 (-Res disp-)", level: 2, bold: true, selected: true },
]

function TreeRow({ item }: { item: TreeItem }) {
  return (
    <li className={clsx("flex items-center", item.level === 2 && "pl-[41px]")}>
      {item.level === 1 && (
        <span className="flex w-[22px] shrink-0 pl-[5px] text-gray-600">
          {item.arrow && (
            <svg viewBox="0 0 6 6" className="size-[6px]" aria-hidden="true">
              <path d={item.arrow === "open" ? "M0 1h6L3 5z" : "M1 0v6l4-3z"} fill="currentColor" />
            </svg>
          )}
        </span>
      )}
      <span
        className={clsx(
          "flex h-5 items-center whitespace-pre",
          item.level === 0 ? "gap-[5px]" : "gap-1",
          item.level === 2 && "border pl-[2px] pr-[3px]",
          item.bold && "font-semibold",
          item.selected ? "border-[#5b87a8] bg-[#a3cbe8]" : "border-transparent"
        )}
      >
        <Icon name={item.icon} />
        {item.label}
      </span>
    </li>
  )
}

function Splitter() {
  return (
    <div className="flex h-4 shrink-0 items-center justify-center border-y border-gray-300">
      <span className="size-[5px] rounded-full border border-gray-500" />
    </div>
  )
}

const managerTabs: [GlyphName, string][] = [
  ["part", "FeatureManager"],
  ["props", "PropertyManager"],
  ["config", "ConfigurationManager"],
  ["target", "DimXpertManager"],
  ["ballDark", "DisplayManager"],
]

function Chevron({ d }: { d: string }) {
  return (
    <svg viewBox="0 0 8 8" className="size-2" fill="none" stroke="#444" strokeWidth="1.600" aria-hidden="true">
      <path d={d} />
    </svg>
  )
}

function SidePanel() {
  return (
    <aside className="flex w-[219px] shrink-0 flex-col overflow-hidden border-r border-gray-400 pr-[2px] pt-1">
      <Splitter />
      <div className="mt-1 flex h-6 shrink-0">
        {managerTabs.map(([icon, label], i) => (
          <button
            key={label}
            aria-label={label}
            className={clsx(
              "flex items-center justify-center border-r border-t border-gray-500",
              i === 0 ? "w-[37px] border-t-gray-400" : "w-[38px] border-b bg-[#d0d0d0]"
            )}
          >
            <Icon name={icon} />
          </button>
        ))}
        <button aria-label="More managers" className="ml-auto pr-1">
          <Chevron d="M2 0l4 4-4 4" />
        </button>
      </div>
      <div className="ml-[3px] flex h-6 shrink-0 items-center border border-gray-300 pl-[2px]">
        <Icon name="funnel" />
      </div>
      <div className="mt-[2px] flex shrink-0">
        <ul className="grid h-[61px] w-[204px] auto-rows-fr overflow-hidden pl-px">
          {featureTree.map((item) => (
            <TreeRow key={item.label} item={item} />
          ))}
        </ul>
        <div className="flex w-3 flex-col items-center justify-between bg-[#f7f7f7] py-1">
          <Chevron d="M0 6l4-4 4 4" />
          <span className="-mt-3 h-4 w-3 bg-[#cdcdcd]" />
          <Chevron d="M0 2l4 4 4-4" />
        </div>
      </div>
      <div className="flex h-[14px] shrink-0 items-center px-[3px]">
        <Chevron d="M6 0 2 4l4 4" />
        <span className="ml-1 h-[14px] w-[94px] bg-[#cdcdcd]" />
        <span className="ml-auto pr-[13px]">
          <Chevron d="M2 0l4 4-4 4" />
        </span>
      </div>
      <div className="mt-[2px] flex flex-col">
        <Splitter />
        <div className="ml-[2px] flex h-6 items-center gap-[2px] border border-gray-300 pl-[2px]">
          <Icon name="funnel" />
          <span className="mt-2 flex">
            <Caret />
          </span>
        </div>
      </div>
      <ul className="mt-px grid h-[309px] shrink-0 auto-rows-fr">
        {studyTree.map((item) => (
          <TreeRow key={item.label} item={item} />
        ))}
      </ul>
    </aside>
  )
}

/* ---------- deformed frame plot ---------- */

type Point = [number, number]
type Rgb = [number, number, number]
type Stop = [number, Rgb]

const RED: Rgb = [240, 10, 0]
const SCARLET: Rgb = [245, 75, 0]
const BROWN: Rgb = [205, 70, 10]
const AMBER: Rgb = [230, 145, 10]
const YELLOW: Rgb = [240, 240, 10]
const OLIVE: Rgb = [165, 165, 10]
const LIME: Rgb = [155, 230, 10]
const GREEN: Rgb = [5, 220, 20]
const LEAF: Rgb = [45, 170, 15]
const TEAL: Rgb = [10, 215, 140]
const CYAN: Rgb = [20, 220, 225]
const SKY: Rgb = [15, 130, 220]
const BLUE: Rgb = [5, 65, 220]
const NAVY: Rgb = [0, 0, 210]

function mix(stops: Stop[], t: number): Rgb {
  const last = stops[stops.length - 1]
  if (t >= last[0]) return last[1]
  const i = Math.max(1, stops.findIndex(([at]) => at > t))
  const [t0, a] = stops[i - 1]
  const [t1, b] = stops[i]
  const k = Math.max(0, (t - t0) / (t1 - t0))
  return [a[0] + (b[0] - a[0]) * k, a[1] + (b[1] - a[1]) * k, a[2] + (b[2] - a[2]) * k]
}

const shade = (c: Rgb, k: number) => `rgb(${c.map((v) => Math.round(Math.min(255, v * k))).join(",")})`

function bezier([p0, p1, p2, p3]: Point[], t: number): Point {
  const u = 1 - t
  const at = (k: 0 | 1) => u * u * u * p0[k] + 3 * u * u * t * p1[k] + 3 * u * t * t * p2[k] + t * t * t * p3[k]
  return [at(0), at(1)]
}

// cross section of the shaded pipe: [relative width, brightness]
const SHELLS: [number, number][] = [
  [1, 0.62],
  [0.9, 0.78],
  [0.76, 0.9],
  [0.55, 1],
  [0.2, 1.06],
]

function Tube({ curve, width, rings, stops }: { curve: Point[]; width: number; rings: number; stops: Stop[] }) {
  const pts = Array.from({ length: rings + 1 }, (_, i) => bezier(curve, i / rings))
  const dirs = pts.map((_, i) => {
    const a = pts[Math.max(0, i - 1)]
    const b = pts[Math.min(rings, i + 1)]
    const len = Math.hypot(b[0] - a[0], b[1] - a[1])
    return [(b[0] - a[0]) / len, (b[1] - a[1]) / len]
  })
  return (
    <g>
      {SHELLS.map(([w, k]) =>
        pts.slice(0, -1).map((p, i) => (
          <line
            key={`${w}-${i}`}
            x1={p[0] - dirs[i][0]}
            y1={p[1] - dirs[i][1]}
            x2={pts[i + 1][0] + dirs[i][0]}
            y2={pts[i + 1][1] + dirs[i][1]}
            stroke={shade(mix(stops, (i + 0.5) / rings), k)}
            strokeWidth={width * w}
          />
        ))
      )}
      {pts.map(([x, y], i) => {
        const [dx, dy] = dirs[i]
        const nx = (-dy * width) / 2
        const ny = (dx * width) / 2
        return (
          <path
            key={i}
            d={`M${x + nx} ${y + ny}Q${x + dx * 6} ${y + dy * 6} ${x - nx} ${y - ny}`}
            stroke="#111"
            strokeWidth="0.8"
            fill="none"
          />
        )
      })}
    </g>
  )
}

const tubes: { curve: Point[]; width: number; rings: number; stops: Stop[] }[] = [
  // head tube
  { curve: [[449, 262], [442, 290], [436, 318], [427, 350]], width: 19, rings: 8, stops: [[0, TEAL], [0.22, CYAN], [0.4, BLUE], [0.5, BLUE], [0.66, CYAN], [0.9, GREEN]] },
  // fork
  { curve: [[421, 352], [384, 422], [340, 486], [297, 558]], width: 19, rings: 20, stops: [[0, LIME], [0.35, LIME], [0.52, GREEN], [0.68, TEAL], [0.8, CYAN], [0.92, SKY], [1, BLUE]] },
  { curve: [[427, 350], [404, 426], [372, 500], [355, 576]], width: 19, rings: 20, stops: [[0, LIME], [0.38, LIME], [0.55, GREEN], [0.7, TEAL], [0.82, CYAN], [0.93, SKY], [1, BLUE]] },
  { curve: [[291, 562], [310, 567], [330, 573], [349, 578]], width: 17, rings: 7, stops: [[0, NAVY], [1, NAVY]] },
  // rear dropout axle
  { curve: [[946, 428], [966, 433], [986, 438], [1006, 444]], width: 17, rings: 7, stops: [[0, NAVY], [1, NAVY]] },
  // seat stays
  { curve: [[796, 236], [844, 302], [895, 364], [944, 424]], width: 20, rings: 28, stops: [[0, BROWN], [0.22, BROWN], [0.38, OLIVE], [0.55, LEAF], [0.75, [20, 160, 100]], [0.88, [15, 130, 150]], [1, BLUE]] },
  { curve: [[799, 236], [861, 307], [930, 376], [1003, 440]], width: 21, rings: 28, stops: [[0, BROWN], [0.25, BROWN], [0.4, OLIVE], [0.55, LEAF], [0.65, [10, 175, 30]], [0.8, [20, 165, 140]], [0.93, SKY], [1, BLUE]] },
  // seat tube
  { curve: [[793, 236], [764, 334], [730, 436], [700, 540]], width: 21, rings: 26, stops: [[0, SCARLET], [0.82, SCARLET], [0.9, RED], [1, RED]] },
  // down tube
  { curve: [[424, 351], [512, 408], [602, 476], [692, 543]], width: 20, rings: 34, stops: [[0, LEAF], [0.5, LEAF], [0.64, OLIVE], [0.76, BROWN], [0.88, [200, 15, 0]], [1, [200, 0, 0]]] },
  // chain stays
  { curve: [[696, 542], [774, 508], [860, 468], [944, 428]], width: 19, rings: 28, stops: [[0, RED], [0.18, SCARLET], [0.3, AMBER], [0.38, YELLOW], [0.48, LIME], [0.6, GREEN], [0.75, TEAL], [0.85, CYAN], [0.93, SKY], [1, BLUE]] },
  { curve: [[696, 544], [794, 516], [900, 480], [1003, 446]], width: 21, rings: 29, stops: [[0, RED], [0.1, RED], [0.16, SCARLET], [0.26, SCARLET], [0.34, AMBER], [0.42, YELLOW], [0.5, LIME], [0.6, GREEN], [0.75, TEAL], [0.84, CYAN], [0.92, SKY], [1, BLUE]] },
  // top tube
  { curve: [[456, 262], [569, 224], [683, 249], [796, 238]], width: 20, rings: 38, stops: [[0, GREEN], [0.07, GREEN], [0.13, LIME], [0.18, YELLOW], [0.33, YELLOW], [0.44, LIME], [0.54, GREEN], [0.67, GREEN], [0.75, LIME], [0.83, YELLOW], [0.88, AMBER], [0.92, BROWN], [1, BROWN]] },
]

const nodes: Record<string, Point> = {
  head: [454, 259],
  crown: [420, 348],
  seat: [796, 229],
  bracket: [693, 535],
  rearLeft: [946, 426],
  rearRight: [1006, 444],
  frontLeft: [291, 562],
  frontRight: [349, 581],
}

const members: [string, string][] = [
  ["head", "crown"],
  ["head", "seat"],
  ["crown", "bracket"],
  ["crown", "frontLeft"],
  ["crown", "frontRight"],
  ["frontLeft", "frontRight"],
  ["seat", "bracket"],
  ["seat", "rearLeft"],
  ["seat", "rearRight"],
  ["bracket", "rearLeft"],
  ["bracket", "rearRight"],
  ["rearLeft", "rearRight"],
]

function ForceArrow({ x, top, tip, fill, dark }: { x: number; top: number; tip: number; fill: string; dark: string }) {
  return (
    <g>
      <path d={`M${x - 3} ${top}h7v${tip - top - 18}h-7z`} fill={fill} />
      <path d={`M${x + 2} ${top}h2v${tip - top - 18}h-2z`} fill={dark} />
      <path d={`M${x - 14} ${tip - 19}q14-4 28 0L${x + 4} ${tip + 2}h-8z`} fill={dark} />
      <path d={`M${x - 14} ${tip - 19}q14-4 28 0l-2 2h-24z`} fill={fill} />
    </g>
  )
}

// fixture cone pointing up, turned round its own tip by `turn`
function Cone({ x, y, turn = 0, size = 1 }: { x: number; y: number; turn?: number; size?: number }) {
  return (
    <g transform={`translate(${x} ${y}) rotate(${turn}) scale(${size})`}>
      <path d="M-3 24h6v12h-6z" fill="#d9652c" />
      <path d="M0 0 10 26q-10 6-20 0z" fill="url(#cone)" />
    </g>
  )
}

function FrameModel() {
  return (
    <svg
      viewBox="219 151 1060 518"
      preserveAspectRatio="xMinYMin meet"
      className="pointer-events-none absolute inset-0 size-full"
      role="img"
      aria-label="Displacement plot of the bicycle frame"
    >
      <defs>
        <radialGradient id="node" cx="40%" cy="35%" r="70%">
          <stop offset="0" stopColor="#ff2dff" />
          <stop offset=".55" stopColor="#f000f0" />
          <stop offset="1" stopColor="#8a008a" />
        </radialGradient>
        <linearGradient id="cone">
          <stop offset="0" stopColor="#d9682e" />
          <stop offset=".4" stopColor="#f58246" />
          <stop offset="1" stopColor="#a84c1c" />
        </linearGradient>
      </defs>

      <Cone x={293} y={519} />
      <Cone x={260} y={552} turn={-72} size={0.9} />
      <Cone x={257} y={570} turn={-97} />
      <Cone x={941} y={397} />
      <Cone x={915} y={414} turn={-60} size={0.9} />
      <Cone x={1006} y={400} />

      {tubes.map((t, i) => (
        <Tube key={i} {...t} />
      ))}
      <circle cx="694" cy="544" r="9" fill="#d80000" />

      {members.map(([a, b]) => (
        <line key={a + b} x1={nodes[a][0]} y1={nodes[a][1]} x2={nodes[b][0]} y2={nodes[b][1]} stroke="#8b8b8b" strokeWidth="1.800" />
      ))}

      <Cone x={350} y={537} />
      <Cone x={316} y={587} turn={-97} />
      <g fill="#e07a3e" stroke="#b4521f" strokeWidth=".8">
        <ellipse cx="368" cy="587" rx="8" ry="10" />
        <path d="M369 583l11 3q4 3 1 7l-13-2z" />
        <ellipse cx="1024" cy="445" rx="9" ry="14" />
        <path d="M1028 437l11-4 3 5-11 5zM1024 448l14 2v6l-14-2z" />
      </g>

      <ForceArrow x={456} top={160} tip={250} fill="#cf6512" dark="#a04c0a" />
      <ForceArrow x={796} top={151} tip={219} fill="#e2e200" dark="#a3a300" />
      <ForceArrow x={695} top={435} tip={526} fill="#e2e200" dark="#a3a300" />

      {Object.entries(nodes).map(([name, [x, y]]) => (
        <g key={name}>
          <circle cx={x} cy={y} r="10.500" fill="url(#node)" />
          <path d={`M${x - 3} ${y}h6M${x} ${y - 3}v6`} stroke="#8b8b8b" strokeWidth="3" />
        </g>
      ))}

      <path d="M557 517 686 539" stroke="#555" />
      <circle cx="557" cy="517" r="2.500" fill="#fff" stroke="#555" />
      <circle cx="686" cy="539" r="2.500" fill="none" stroke="#fff" strokeWidth="1.500" />

      {/* view triad */}
      <path d="M258 614V596" stroke="#1d6b25" strokeWidth="3" />
      <path d="M258 587l4 11h-8z" fill="#1d6b25" />
      <path d="M258 615l-10-4" stroke="#13138f" strokeWidth="3" />
      <path d="M240 607l11 0-2 8z" fill="#13138f" />
      <path d="M258 615l-10 2" stroke="#c01818" strokeWidth="3" />
      <path d="M238 618l10-5 2 8z" fill="#c01818" />
      <g fontFamily="Liberation Sans" fontSize="10">
        <text x="254" y="586" fill="#2c6e34">Y</text>
        <text x="233" y="611" fill="#2424a0">Z</text>
        <text x="231" y="623" fill="#c01818">X</text>
      </g>
    </svg>
  )
}

const legendValues = ["0.084", "0.077", "0.070", "0.063", "0.056", "0.049", "0.042", "0.035", "0.028", "0.021", "0.014", "0.007", "0.000"]

function Legend() {
  return (
    <div className="absolute right-[148px] top-[89px] w-[62px]">
      <div className="whitespace-nowrap leading-3">URES (mm)</div>
      <div className="mt-[22px] flex h-[293px]">
        <div className="w-[22px] border-y border-black bg-[linear-gradient(to_bottom,#f00_0%,#ff0_25%,#0f0_50%,#0ff_75%,#00f_100%)]" />
        <ul className="-mt-[10px] mb-[-3px] flex grow flex-col justify-between">
          {legendValues.map((v) => (
            <li key={v} className="flex h-3 items-center">
              <span className="mt-2 h-px w-[3px] bg-black" />
              <span className="ml-2 leading-3">{v}</span>
            </li>
          ))}
        </ul>
      </div>
    </div>
  )
}

const viewTools: { icon: GlyphName; label: string; caret?: boolean }[] = [
  { icon: "zoomFit", label: "Zoom to fit" },
  { icon: "zoomArea", label: "Zoom to area" },
  { icon: "prevView", label: "Previous view" },
  { icon: "section", label: "Section view" },
  { icon: "dynamic", label: "Dynamic annotation views" },
  { icon: "orient", label: "View orientation", caret: true },
  { icon: "cube", label: "Display style", caret: true },
  { icon: "eye", label: "Hide or show items", caret: true },
  { icon: "ballPen", label: "Edit appearance" },
  { icon: "ballScene", label: "Apply scene", caret: true },
  { icon: "monitor", label: "View settings", caret: true },
]

const taskPane: [GlyphName, string][] = [
  ["house", "Resources"],
  ["books", "Design library"],
  ["folderOpen", "File explorer"],
  ["palette", "View palette"],
  ["ball", "Appearances"],
  ["props", "Custom properties"],
  ["forum", "Forum"],
]

function Viewport() {
  return (
    <main className="relative grow overflow-hidden bg-white font-['DejaVu_Sans'] text-[9px] text-gray-800">
      <div className="absolute left-[15px] top-[6px] whitespace-nowrap leading-3">
        <p>Model name:Bicycle frame</p>
        <p>Study name:Bicycle Frame analysis(-Default&lt;As Machined&gt;-)</p>
        <p>Plot type: Static displacement Displacement1</p>
        <p>Deformation scale: 150</p>
      </div>
      <div className="absolute left-[366px] top-[6px] flex gap-[7px]">
        {viewTools.map((t) => (
          <button key={t.icon} aria-label={t.label} className="flex items-center gap-[9px]">
            <Icon name={t.icon} />
            {t.caret && <Caret className="text-gray-400" />}
          </button>
        ))}
      </div>
      <FrameModel />
      <div className="absolute left-[249px] top-[353px] flex h-6 w-[89px] items-center border border-gray-500 bg-white">
        <span className="flex h-full w-[31px] items-center justify-center border-r border-gray-500 bg-gray-100">Max:</span>
        <span className="pl-[3px]">0.084</span>
      </div>
      <Legend />
      <button
        aria-label="Collapse panel"
        className="absolute -left-px top-[230px] flex h-[37px] w-[9px] items-center justify-center border border-l-0 border-gray-400 bg-[#f7f7f7]"
      >
        <span className="size-[5px] rounded-full border border-gray-500" />
      </button>
      <div className="absolute right-0 top-[28px] flex w-6 flex-col border-l border-t border-gray-500">
        {taskPane.map(([icon, label], i) => (
          <button
            key={label}
            aria-label={label}
            className={clsx("flex h-[22px] items-center justify-center border-b border-gray-500", i === 0 ? "bg-[#f7f7f7]" : "bg-[#d4d4d4]")}
          >
            <Icon name={icon} />
          </button>
        ))}
      </div>
    </main>
  )
}

/* ---------- bottom bars ---------- */

const steps: [string, string][] = [
  ["First tab", "M2 1v6M7 1 3 4l4 3z"],
  ["Previous tab", "M6 1 2 4l4 3z"],
  ["Next tab", "M2 1l4 3-4 3z"],
  ["Last tab", "M6 1v6M1 1l4 3-4 3z"],
]

function BottomTabs() {
  return (
    <div className="flex h-[15px] shrink-0 border-b border-gray-500 leading-[13px]">
      <div className="flex w-[62px] bg-[#b8b8b8] pl-[2px]">
        {steps.map(([label, d]) => (
          <button key={label} aria-label={label} className="flex w-[15px] items-center justify-center border border-gray-400">
            <svg viewBox="0 0 8 8" className="size-2" fill="#999" stroke="#999">
              <path d={d} />
            </svg>
          </button>
        ))}
      </div>
      <button className="w-[54px] border-r border-t border-gray-500 bg-[#d2d2d2] pl-[5px]">Model</button>
      <button className="w-[64px] border-r border-t border-gray-500 bg-[#d2d2d2]">3D Views</button>
      <button className="w-[94px] border-r border-t border-gray-500 bg-[#d2d2d2]">Motion Study 1</button>
      <button className="flex w-[150px] items-center gap-1 whitespace-nowrap border-r border-gray-500 pl-[7px] font-semibold">
        <Icon name="analysis" className="size-[10px]" />
        Bicycle Frame analysis
      </button>
      <div className="grow border-t border-gray-500" />
    </div>
  )
}

function StatusBar() {
  return (
    <footer className="flex h-4 shrink-0 items-center whitespace-nowrap pl-px leading-4">
      <span className="grow pt-[3px]">SOLIDWORKS Premium 2019 SP1.0</span>
      <span className="w-[9px] self-stretch border-x border-gray-300" />
      <span className="w-[110px] pl-[2px] pt-[3px]">Editing Part</span>
      <button className="flex w-[119px] items-center gap-4 pt-[3px]">
        MMGS
        <span className="flex rotate-180">
          <Caret />
        </span>
      </button>
      <Icon name="tag" className="mr-[2px] size-[15px]" />
    </footer>
  )
}

function Window({ children }: { children: ReactNode }) {
  return (
    <div className="flex min-h-screen flex-col bg-black py-5 font-['Open_Sans',sans-serif] text-[11px] text-gray-900">
      <div className="flex grow flex-col border-r border-gray-800 bg-[#f7f7f7]">{children}</div>
    </div>
  )
}

export default function App() {
  return (
    <Window>
      <TitleBar />
      <Ribbon />
      <RibbonTabs />
      <div className="flex grow">
        <SidePanel />
        <Viewport />
      </div>
      <BottomTabs />
      <StatusBar />
    </Window>
  )
}
